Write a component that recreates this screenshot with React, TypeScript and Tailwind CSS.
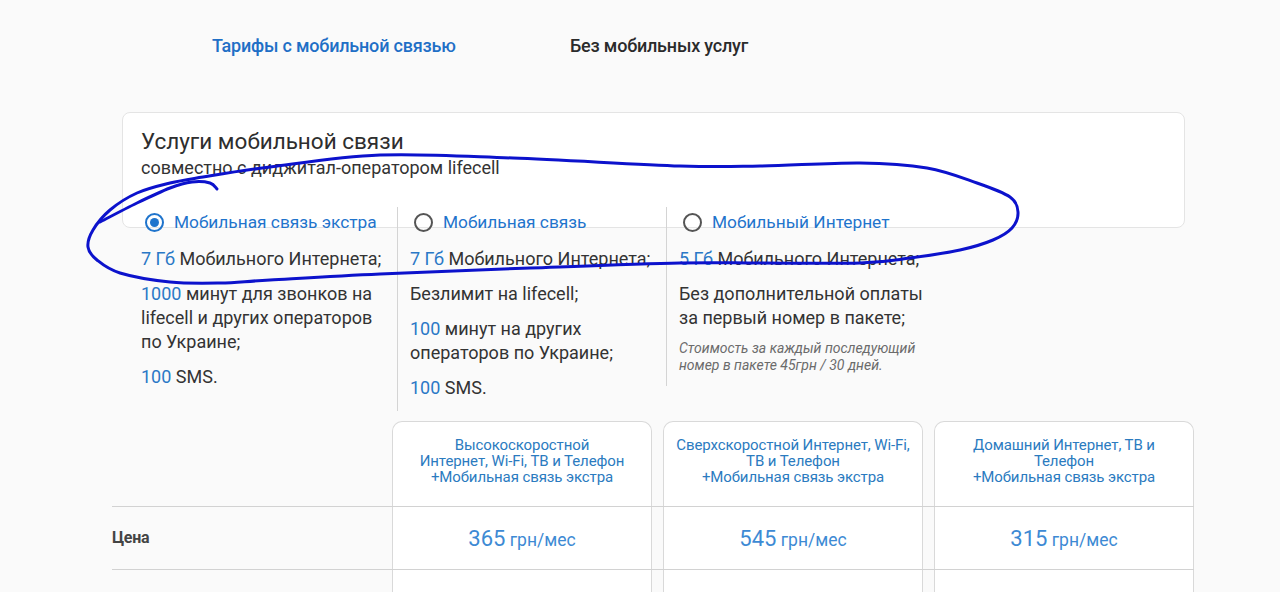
import React from "react";

type Pt = [number, number];

function smoothPath(pts: Pt[], closed = false): string {
  const p = closed ? [...pts, pts[0]] : pts;
  const n = p.length;
  let d = `M${p[0][0]},${p[0][1]}`;
  for (let i = 0; i < n - 1; i++) {
    const p0 = i > 0 ? p[i - 1] : closed ? p[n - 2] : p[i];
    const p1 = p[i];
    const p2 = p[i + 1];
    const p3 = i + 2 < n ? p[i + 2] : closed ? p[1] : p2;
    const c1x = p1[0] + (p2[0] - p0[0]) / 6;
    const c1y = p1[1] + (p2[1] - p0[1]) / 6;
    const c2x = p2[0] - (p3[0] - p1[0]) / 6;
    const c2y = p2[1] - (p3[1] - p1[1]) / 6;
    d += ` C${c1x.toFixed(1)},${c1y.toFixed(1)} ${c2x.toFixed(1)},${c2y.toFixed(1)} ${p2[0]},${p2[1]}`;
  }
  return d;
}

const loop: Pt[] = [
  [380, 155], [513, 158], [680, 166], [760, 166], [860, 163], [927, 168], [977, 183],
  [1010, 197], [1018, 212], [1012, 228], [993, 240], [960, 250], [910, 258], [860, 263],
  [760, 263], [680, 263], [530, 268], [380, 274], [270, 280], [220, 283], [170, 282],
  [120, 273], [97, 260], [88, 247], [93, 230], [110, 210], [137, 193], [170, 183],
  [203, 177], [270, 167],
];

const tail: Pt[] = [[100, 222], [137, 203], [170, 188], [192, 182], [210, 183], [217, 189]];

function Radio({ checked }: { checked?: boolean }) {
  return checked ? (
    <span className="ml-[4px] flex h-[19px] w-[19px] shrink-0 items-center justify-center rounded-full border-2 border-[#1f74cc]">
      <span className="h-[9px] w-[9px] rounded-full bg-[#1f74cc]" />
    </span>
  ) : (
    <span className="ml-[4px] h-[19px] w-[19px] shrink-0 rounded-full border-2 border-[#555]" />
  );
}

const B = ({ children }: { children: React.ReactNode }) => (
  <span className="text-[#2a78c6]">{children}</span>
);

function HeaderCell({ children, first }: { children: React.ReactNode; first?: boolean }) {
  return (
    <div
      className={`w-[260px] ${first ? "" : "ml-[11px]"} rounded-t-[10px] border-x border-t border-[#d9d9d9] bg-white px-2 pt-[15px] text-center text-[15px] leading-[16px] tracking-[-0.1px] text-[#2b7bbf]`}
    >
      {children}
    </div>
  );
}

function Cell({ children, first }: { children?: React.ReactNode; first?: boolean }) {
  return (
    <div
      className={`w-[260px] ${first ? "" : "ml-[11px]"} flex items-center justify-center border-x border-[#d9d9d9] bg-white`}
    >
      {children}
    </div>
  );
}

function Price({ v }: { v: string }) {
  return (
    <span className="text-[#3d8ad4]">
      <span className="text-[22px]">{v}</span>
      <span className="text-[17.5px]"> грн/мес</span>
    </span>
  );
}

export default function App() {
  return (
    <div
      className="relative h-[592px] w-[1280px] overflow-hidden bg-[#fafafa] text-[#333]"
      style={{ fontFamily: "Roboto, 'Noto Sans', sans-serif" }}
    >
      {/* tabs */}
      <div className="flex pl-[212px] pt-[35px] text-[18px] font-medium leading-[22px] tracking-[-0.2px]">
        <div className="w-[358px] text-[#1f6fc6]">Тарифы с мобильной связью</div>
        <div className="text-[#2b2b2b]">Без мобильных услуг</div>
      </div>

      {/* card */}
      <div className="ml-[122px] mt-[55px] h-[116px] w-[1063px] rounded-[8px] border border-[#e4e4e4] bg-white px-[18px] pt-[14px]">
        <div className="text-[22.5px] leading-[28px] text-[#2e2e2e]">Услуги мобильной связи</div>
        <div className="mt-[2px] text-[18px] leading-[22px] text-[#333]">
          совместно с диджитал-оператором lifecell
        </div>
      </div>

      {/* options */}
      <div className="relative z-10 -mt-[21px] ml-[141px] flex items-start text-[18px] leading-[24px]">
        <div className="w-[256px] pb-[11px]">
          <div className="flex h-[30px] items-center gap-[10px]">
            <Radio checked />
            <span className="text-[17.3px] text-[#1f74cc]">Мобильная связь экстра</span>
          </div>
          <div className="mt-[10px] flex flex-col gap-[11px]">
            <p>
              <B>7 Гб</B> Мобильного Интернета;
            </p>
            <p>
              <B>1000</B> минут для звонков на lifecell и других операторов по Украине;
            </p>
            <p>
              <B>100</B> SMS.
            </p>
          </div>
        </div>
        <div className="w-[269px] border-l border-[#d4d4d4] pb-[11px] pl-[12px]">
          <div className="flex h-[30px] items-center gap-[10px]">
            <Radio />
            <span className="text-[17.3px] text-[#1f74cc]">Мобильная связь</span>
          </div>
          <div className="mt-[10px] flex flex-col gap-[11px]">
            <p className="whitespace-nowrap">
              <B>7 Гб</B> Мобильного Интернета;
            </p>
            <p>Безлимит на lifecell;</p>
            <p>
              <B>100</B> минут на других операторов по Украине;
            </p>
            <p>
              <B>100</B> SMS.
            </p>
          </div>
        </div>
        <div className="w-[269px] border-l border-[#d4d4d4] pb-[12px] pl-[12px]">
          <div className="flex h-[30px] items-center gap-[10px]">
            <Radio />
            <span className="text-[17.3px] text-[#1f74cc]">Мобильный Интернет</span>
          </div>
          <div className="mt-[10px] flex flex-col gap-[11px]">
            <p className="whitespace-nowrap">
              <B>5 Гб</B> Мобильного Интернета;
            </p>
            <p className="whitespace-nowrap">
              Без дополнительной оплаты
              <br />
              за первый номер в пакете;
            </p>
          </div>
          <p className="mt-[10px] whitespace-nowrap text-[14px] italic leading-[17px] text-[#6b6b6b]">
            Стоимость за каждый последующий
            <br />
            номер в пакете 45грн / 30 дней.
          </p>
        </div>
      </div>

      {/* table */}
      <div className="ml-[112px] mt-[10px] w-[1082px]">
        <div className="flex h-[86px] border-b border-[#d2d2d2]">
          <div className="w-[280px]" />
          <HeaderCell first>
            Высокоскоростной
            <br />
            Интернет, Wi-Fi, ТВ и Телефон
            <br />
            +Мобильная связь экстра
          </HeaderCell>
          <HeaderCell>
            Сверхскоростной Интернет, Wi-Fi,
            <br />
            ТВ и Телефон
            <br />
            +Мобильная связь экстра
          </HeaderCell>
          <HeaderCell>
            Домашний Интернет, ТВ и
            <br />
            Телефон
            <br />
            +Мобильная связь экстра
          </HeaderCell>
        </div>
        <div className="flex h-[63px] border-b border-[#d2d2d2]">
          <div className="flex w-[280px] items-center text-[16px] font-bold tracking-[-0.3px] text-[#444]">
            Цена
          </div>
          <Cell first>
            <Price v="365" />
          </Cell>
          <Cell>
            <Price v="545" />
          </Cell>
          <Cell>
            <Price v="315" />
          </Cell>
        </div>
        <div className="flex h-[40px]">
          <div className="w-[280px]" />
          <Cell first />
          <Cell />
          <Cell />
        </div>
      </div>

      {/* hand-drawn annotation */}
      <svg
        className="pointer-events-none absolute left-0 top-0 z-20"
        width="1280"
        height="592"
        viewBox="0 0 1280 592"
      >
        <path d={smoothPath(loop, true)} fill="none" stroke="#0c12cc" strokeWidth="3" strokeLinecap="round" strokeLinejoin="round" />
        <path d={smoothPath(tail)} fill="none" stroke="#0c12cc" strokeWidth="3" strokeLinecap="round" strokeLinejoin="round" />
      </svg>
    </div>
  );
}
